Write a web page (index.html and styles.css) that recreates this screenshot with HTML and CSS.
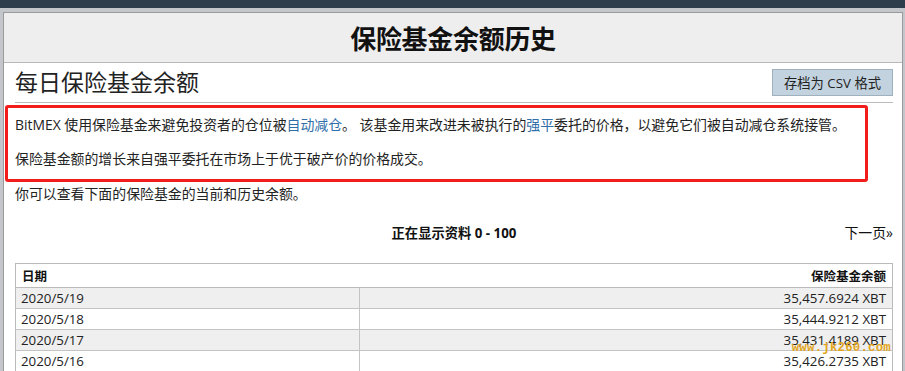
FILE: index.html
```html
<!DOCTYPE html>
<html lang="zh-CN">
<head>
  <meta charset="UTF-8" />
  <meta name="viewport" content="width=device-width, initial-scale=1.0"/>
  <title>保险基金余额历史</title>
  <link rel="stylesheet" href="styles.css">
</head>
<body>

  <!-- TOP BAR -->
  <div class="topbar"></div>

  <div class="frame">
    <div class="panel">

      <!-- PAGE TITLE -->
      <div class="panel-head">
        <h1>保险基金余额历史</h1>
      </div>

      <div class="content">

        <div class="section-head">
          <h2>每日保险基金余额</h2>
          <button class="csv-btn">存档为 CSV 格式</button>
        </div>

        <div class="highlight">
          <p>BitMEX 使用保险基金来避免投资者的仓位被<a href="#">自动减仓</a>。 该基金用来改进未被执行的<a href="#">强平</a>委托的价格，以避免它们被自动减仓系统接管。</p>
          <p>保险基金额的增长来自强平委托在市场上于优于破产价的价格成交。</p>
        </div>

        <p class="note">你可以查看下面的保险基金的当前和历史余额。</p>

        <div class="pager">
          <span class="pager-info">正在显示资料 0 - 100</span>
          <a class="pager-next" href="#">下一页»</a>
        </div>

        <div class="table-wrap">
          <table class="history">
            <thead>
              <tr>
                <th class="col-date">日期</th>
                <th class="col-amount">保险基金余额</th>
              </tr>
            </thead>
            <tbody>
              <tr><td>2020/5/19</td><td class="num">35,457.6924 XBT</td></tr>
              <tr><td>2020/5/18</td><td class="num">35,444.9212 XBT</td></tr>
              <tr><td>2020/5/17</td><td class="num">35,431.4189 XBT</td></tr>
              <tr><td>2020/5/16</td><td class="num">35,426.2735 XBT</td></tr>
            </tbody>
          </table>
          <span class="watermark">www.jk260.com</span>
        </div>

      </div>
    </div>
  </div>

</body>
</html>
```

FILE: styles.css
```css
html, body {
  margin: 0;
  padding: 0;
  height: 371px;
  overflow: hidden;
}
body {
  font-family: "Open Sans", "Noto Sans CJK SC", sans-serif;
  font-size: 13.3px;
  color: #222;
  background: #c3c7cb;
}
.topbar {
  height: 8px;
  background: #2e3d4c;
}
.frame {
  padding: 4px 2px 0 3px;
}
.panel {
  background: #fff;
  border: 1px solid #9a9a9a;
  border-bottom: none;
  height: 359px;
  overflow: hidden;
}
.panel-head {
  height: 49px;
  background: #eeeeee;
  border-bottom: 1px solid #b8b8b8;
  display: flex;
  align-items: center;
  justify-content: center;
}
.panel-head h1 {
  margin: 0;
  font-size: 26px;
  font-weight: bold;
  color: #111;
  letter-spacing: -0.3px;
}
.content {
  padding: 0 9px 0 11px;
}
.section-head {
  display: flex;
  align-items: center;
  justify-content: space-between;
  padding: 6px 0 6px;
  border-bottom: 1px solid #bbb;
}
.section-head h2 {
  margin: 0;
  font-size: 23px;
  font-weight: normal;
  line-height: 27px;
  color: #222;
}
.csv-btn {
  height: 27px;
  width: 121px;
  padding: 0;
  font-family: inherit;
  font-size: 13.3px;
  color: #222;
  background: #c3d2df;
  border: 1px solid #9fb0be;
  border-radius: 0;
}
.highlight {
  margin: 2px 25px 0 -10px;
  border: 3px solid #f21c1a;
  border-radius: 3px;
  padding: 8px 7px 11px;
}
.highlight p {
  margin: 0;
  font-size: 13.9px;
  line-height: 18px;
}
.highlight p + p {
  margin-top: 16px;
}
a {
  color: #2f6ea8;
  text-decoration: none;
}
.note {
  margin: 3px 0 0;
  font-size: 13.9px;
  line-height: 18px;
}
.pager {
  position: relative;
  margin-top: 21px;
  height: 18px;
  line-height: 18px;
  text-align: center;
}
.pager-info {
  font-weight: bold;
  color: #111;
}
.pager-next {
  position: absolute;
  right: 0;
  top: 0;
  font-size: 13.9px;
  color: #111;
}
.table-wrap {
  position: relative;
  margin-top: 21px;
}
.history {
  width: 100%;
  border-collapse: collapse;
  border: 1px solid #bbb;
}
.history th {
  height: 23px;
  padding: 0 6px;
  font-size: 12.5px;
  font-weight: bold;
  color: #111;
  background: #fff;
  border-bottom: 1px solid #bbb;
}
.history td {
  height: 20px;
  padding: 0 6px 0 5px;
  border-top: 1px solid #c4c4c4;
  line-height: 20px;
}
.history td + td {
  border-left: 1px solid #c4c4c4;
}
.col-date {
  text-align: left;
  width: 331px;
}
.col-amount {
  text-align: right;
}
.num {
  text-align: right;
}
.history tbody tr:nth-child(odd) {
  background: #efefef;
}
.watermark {
  position: absolute;
  right: 2px;
  top: 78px;
  font-family: "Liberation Mono", monospace;
  font-weight: bold;
  font-size: 12.4px;
  color: #e2a61c;
  letter-spacing: 0.2px;
}
```
